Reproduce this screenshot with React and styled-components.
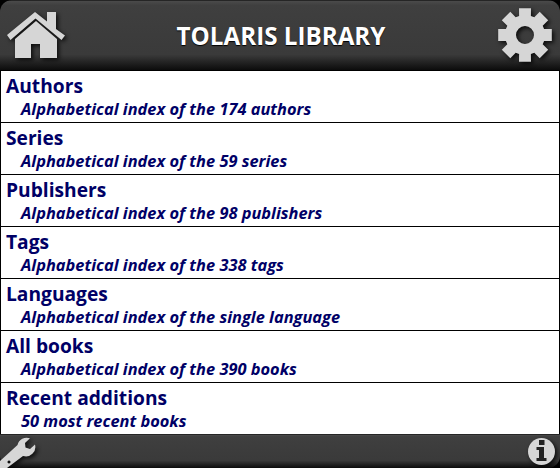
import React from "react";
import styled, { createGlobalStyle } from "styled-components";

const Global = createGlobalStyle`
  html, body { margin: 0; padding: 0; background: #000; }
  body { font-family: "Open Sans", "Liberation Sans", sans-serif; }
`;

const Page = styled.div`
  width: 560px;
  height: 468px;
  display: flex;
  flex-direction: column;
  background: #000;
  overflow: hidden;
`;

const Bar = styled.div`
  flex: none;
  height: ${(p) => p.$height}px;
  display: flex;
  align-items: center;
  justify-content: space-between;
  background: linear-gradient(#000 0, #4a4a4a 1px, #3f3f3f 8%, #3a3a3a 78%, #0c0c0c 100%);
  border-radius: ${(p) => p.$radius};
  padding: ${(p) => p.$padding};
  box-sizing: border-box;
`;

const Title = styled.h1`
  margin: 0;
  color: #fff;
  font-size: 24.2px;
  font-weight: 700;
  text-shadow: 0 1px 1px #000;
`;

const List = styled.ul`
  list-style: none;
  margin: 1px 0 0;
  padding: 0;
  flex: 1;
  display: flex;
  flex-direction: column;
  gap: 1px;
`;

const Row = styled.li`
  height: 51px;
  background: #fff;
  margin: 0 1px;
  padding-left: 5px;
  color: #000066;
  overflow: hidden;
`;

const RowTitle = styled.div`
  font-size: 19.2px;
  font-weight: 700;
  line-height: 24px;
  margin-top: 3px;
`;

const RowSub = styled.div`
  font-size: 16.4px;
  font-weight: 700;
  font-style: italic;
  line-height: 20px;
  margin: 1px 0 0 15px;
`;

const Icon = styled.svg`
  display: block;
  flex: none;
  filter: drop-shadow(2px 2px 2px rgba(0, 0, 0, 0.8));
`;

const HomeIcon = () => (
  <Icon width="58" height="46" viewBox="0 0 58 46">
    <path fill="#d6d6d6" d="M8 46V27L29 9l21 18v19H33V32H24v14z" />
    <path
      fill="#d6d6d6"
      d="M0 23 28 0l12 9.500V0h9v17l9 6.500-3.500 4.500L28.500 6.500 3.500 28z"
    />
  </Icon>
);

const gearPath = (() => {
  const cx = 28;
  const cy = 28;
  const teeth = 8;
  let d = "";
  for (let i = 0; i < teeth; i++) {
    const a = (i * 2 * Math.PI) / teeth - Math.PI / 2;
    const pts = [
      [20, -0.3],
      [27.5, -0.22],
      [27.5, 0.22],
      [20, 0.3],
    ];
    pts.forEach(([r, o], j) => {
      const x = cx + r * Math.cos(a + o);
      const y = cy + r * Math.sin(a + o);
      d += `${i === 0 && j === 0 ? "M" : "L"}${x.toFixed(1)} ${y.toFixed(1)}`;
    });
  }
  return d + "Z M28 19a9 9 0 1 0 0 18a9 9 0 1 0 0-18Z";
})();

const GearIcon = () => (
  <Icon width="56" height="56" viewBox="0 0 56 56">
    <path fill="#d6d6d6" fillRule="evenodd" d={gearPath} />
  </Icon>
);

const WrenchIcon = () => (
  <Icon width="36" height="34" viewBox="0 0 36 34">
    <path
      fillRule="evenodd"
      fill="#d6d6d6"
      d="M0 27 17.500 11A9.500 9.500 0 0 1 30 4.300L25 9l.5 4.500L30 15l5-4.500A9.500 9.500 0 0 1 23 22L7 34H0z M9 26.500a1.500 1.500 0 1 0 .01 0z"
    />
  </Icon>
);

const InfoIcon = () => (
  <Icon width="27" height="27" viewBox="0 0 27 27">
    <circle cx="13.500" cy="13.500" r="13.500" fill="#d6d6d6" />
    <path fill="#222" d="M11 2h5.500v5H11zM8.500 9H16v11h2.500v3H8.500v-3H11v-8H8.500z" />
  </Icon>
);

const rows = [
  ["Authors", "Alphabetical index of the 174 authors"],
  ["Series", "Alphabetical index of the 59 series"],
  ["Publishers", "Alphabetical index of the 98 publishers"],
  ["Tags", "Alphabetical index of the 338 tags"],
  ["Languages", "Alphabetical index of the single language"],
  ["All books", "Alphabetical index of the 390 books"],
  ["Recent additions", "50 most recent books"],
];

export default function App() {
  return (
    <Page>
      <Global />
      <Bar $height={70} $radius="12px 12px 0 0" $padding="0 7px">
        <HomeIcon />
        <Title>TOLARIS LIBRARY</Title>
        <GearIcon />
      </Bar>
      <List>
        {rows.map(([title, sub]) => (
          <Row key={title}>
            <RowTitle>{title}</RowTitle>
            <RowSub>{sub}</RowSub>
          </Row>
        ))}
      </List>
      <Bar $height={34} $radius="0 0 12px 12px" $padding="0 5px 0 0">
        <WrenchIcon />
        <InfoIcon />
      </Bar>
    </Page>
  );
}
